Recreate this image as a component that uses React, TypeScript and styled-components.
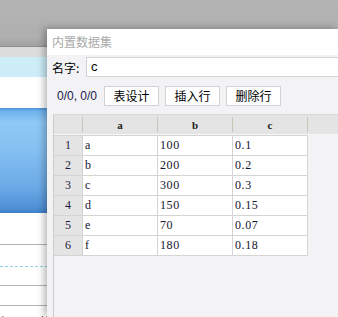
import styled, { createGlobalStyle } from 'styled-components';

const rows = [
  { id: 1, a: 'a', b: '100', c: '0.1' },
  { id: 2, a: 'b', b: '200', c: '0.2' },
  { id: 3, a: 'c', b: '300', c: '0.3' },
  { id: 4, a: 'd', b: '150', c: '0.15' },
  { id: 5, a: 'e', b: '70', c: '0.07' },
  { id: 6, a: 'f', b: '180', c: '0.18' },
];

const columns = ['a', 'b', 'c'];

function App() {
  return (
    <>
      <GlobalStyle />
      <Desktop>
        <BackApp>
          <TopBar />
          <GreyStrip />
          <SelectedStrip />
          <WhiteBand />
          <BlueBand />
          <ListRow $h={31} />
          <ListRow $h={21} $dashed />
          <ListRow $h={18} />
          <ListRow $h={19} />
          <ListText>择不同的数据</ListText>
        </BackApp>

        <Dialog>
          <TitleBar>内置数据集</TitleBar>
          <Body>
            <NameRow>
              <Label>名字:</Label>
              <NameInput>c</NameInput>
            </NameRow>
            <ToolRow>
              <Counter>0/0, 0/0</Counter>
              <Button>表设计</Button>
              <Button>插入行</Button>
              <Button>删除行</Button>
            </ToolRow>
            <TableBox>
              <HeaderRow>
                <HeaderCell />
                {columns.map((c) => (
                  <HeaderCell key={c}>{c}</HeaderCell>
                ))}
                <HeaderFill />
              </HeaderRow>
              <Grid>
                {rows.map((r) => (
                  <Row key={r.id}>
                    <RowNum>{r.id}</RowNum>
                    <Cell>{r.a}</Cell>
                    <Cell>{r.b}</Cell>
                    <Cell>{r.c}</Cell>
                  </Row>
                ))}
              </Grid>
            </TableBox>
          </Body>
        </Dialog>
      </Desktop>
    </>
  );
}

export default App;

const GlobalStyle = createGlobalStyle`
  html, body {
    margin: 0;
    padding: 0;
    width: 338px;
    height: 317px;
    overflow: hidden;
    background: #fff;
  }
`;

const Desktop = styled.div`
  position: relative;
  width: 338px;
  height: 317px;
  overflow: hidden;
  font-family: 'Noto Sans CJK SC', sans-serif;
`;

const BackApp = styled.div`
  display: flex;
  flex-direction: column;
  width: 338px;
`;

const TopBar = styled.div`
  height: 46px;
  background: linear-gradient(#b4b4b4, #afafaf 80%, #a2a2a2);
  border-bottom: 1px solid #8e8e8e;
`;

const GreyStrip = styled.div`
  height: 10px;
  background: #dcdcdc;
`;

const SelectedStrip = styled.div`
  height: 20px;
  background: #cdeef9;
`;

const WhiteBand = styled.div`
  height: 31px;
  background: #fff;
`;

const BlueBand = styled.div`
  height: 105px;
  background: linear-gradient(
    #4a8fd6 0px,
    #6eb1ec 3px,
    #8fc9f6 14px,
    #86c1f2 40px,
    #6aa9e6 80px,
    #4f91d6 100px,
    #3d80c6 105px
  );
`;

const ListRow = styled.div<{ $h: number; $dashed?: boolean }>`
  height: ${({ $h }) => $h}px;
  background: #fff;
  border-bottom: 1px ${({ $dashed }) => ($dashed ? 'dashed #8fd3e3' : 'solid #b4b4b4')};
`;

const ListText = styled.div`
  padding-top: 7px;
  font-size: 13px;
  line-height: 18px;
  color: #222;
  white-space: nowrap;
`;

const Dialog = styled.div`
  position: absolute;
  left: 47px;
  top: 29px;
  width: 291px;
  height: 288px;
  display: flex;
  flex-direction: column;
  background: #f3f3f5;
  box-shadow: -3px -1px 7px rgba(0, 0, 0, 0.28);
`;

const TitleBar = styled.div`
  height: 26px;
  line-height: 26px;
  padding-left: 5px;
  background: #fff;
  color: #a9a9a9;
  font-size: 12px;
`;

const Body = styled.div`
  flex: 1;
  display: flex;
  flex-direction: column;
  padding: 2px 0 0 5px;
  min-height: 0;
`;

const NameRow = styled.div`
  display: flex;
  align-items: center;
  height: 20px;
  margin-right: -6px;
`;

const Label = styled.span`
  width: 34px;
  font-size: 12px;
  color: #000;
`;

const NameInput = styled.div`
  flex: 1;
  height: 18px;
  line-height: 18px;
  padding-left: 4px;
  background: #fff;
  border: 1px solid #d3d3d3;
  font-family: 'Liberation Sans', sans-serif;
  font-size: 13px;
  color: #000;
`;

const ToolRow = styled.div`
  display: flex;
  align-items: center;
  gap: 6px;
  height: 20px;
  margin-top: 9px;
`;

const Counter = styled.span`
  margin-left: 5px;
  margin-right: 1px;
  font-family: 'Liberation Sans', sans-serif;
  font-size: 12px;
  color: #20204a;
`;

const Button = styled.div`
  width: 53px;
  height: 18px;
  line-height: 18px;
  text-align: center;
  background: #fff;
  border: 1px solid #d2d2d2;
  font-size: 12px;
  color: #000;
`;

const TableBox = styled.div`
  flex: 1;
  margin: 8px -4px 0 1px;
  background: #f3f3f5;
  border-left: 1px solid #cdcdcd;
  border-top: 1px solid #d8d8d8;
`;

const HeaderRow = styled.div`
  display: flex;
  height: 19px;
  background: #e4e4e4;
  border-bottom: 1px solid #f6f6f6;
`;

const HeaderCell = styled.div`
  width: 74px;
  height: 15px;
  margin-top: 2px;
  border-right: 1px solid #c6c6b8;
  text-align: center;
  font-family: 'Liberation Serif', serif;
  font-size: 11px;
  font-weight: bold;
  line-height: 17px;
  color: #222;

  &:first-child {
    width: 28px;
  }
`;

const HeaderFill = styled.div`
  flex: 1;
`;

const Grid = styled.div`
  width: 254px;
  border-top: 1px solid #d4d4d4;
`;

const Row = styled.div`
  display: grid;
  grid-template-columns: 29px 75px 75px 75px;
  height: 20px;
  box-sizing: border-box;
  border-bottom: 1px solid #d4d4d4;
`;

const RowNum = styled.div`
  background: #e4e4e4;
  border-right: 1px solid #d4d4d4;
  text-align: center;
  font-family: 'Liberation Serif', serif;
  font-size: 12px;
  line-height: 19px;
  color: #1c1c40;
`;

const Cell = styled.div`
  background: #fff;
  border-right: 1px solid #d4d4d4;
  padding-left: 2px;
  font-family: 'Liberation Serif', serif;
  font-size: 12px;
  letter-spacing: 0.6px;
  line-height: 19px;
  color: #14142e;
`;
